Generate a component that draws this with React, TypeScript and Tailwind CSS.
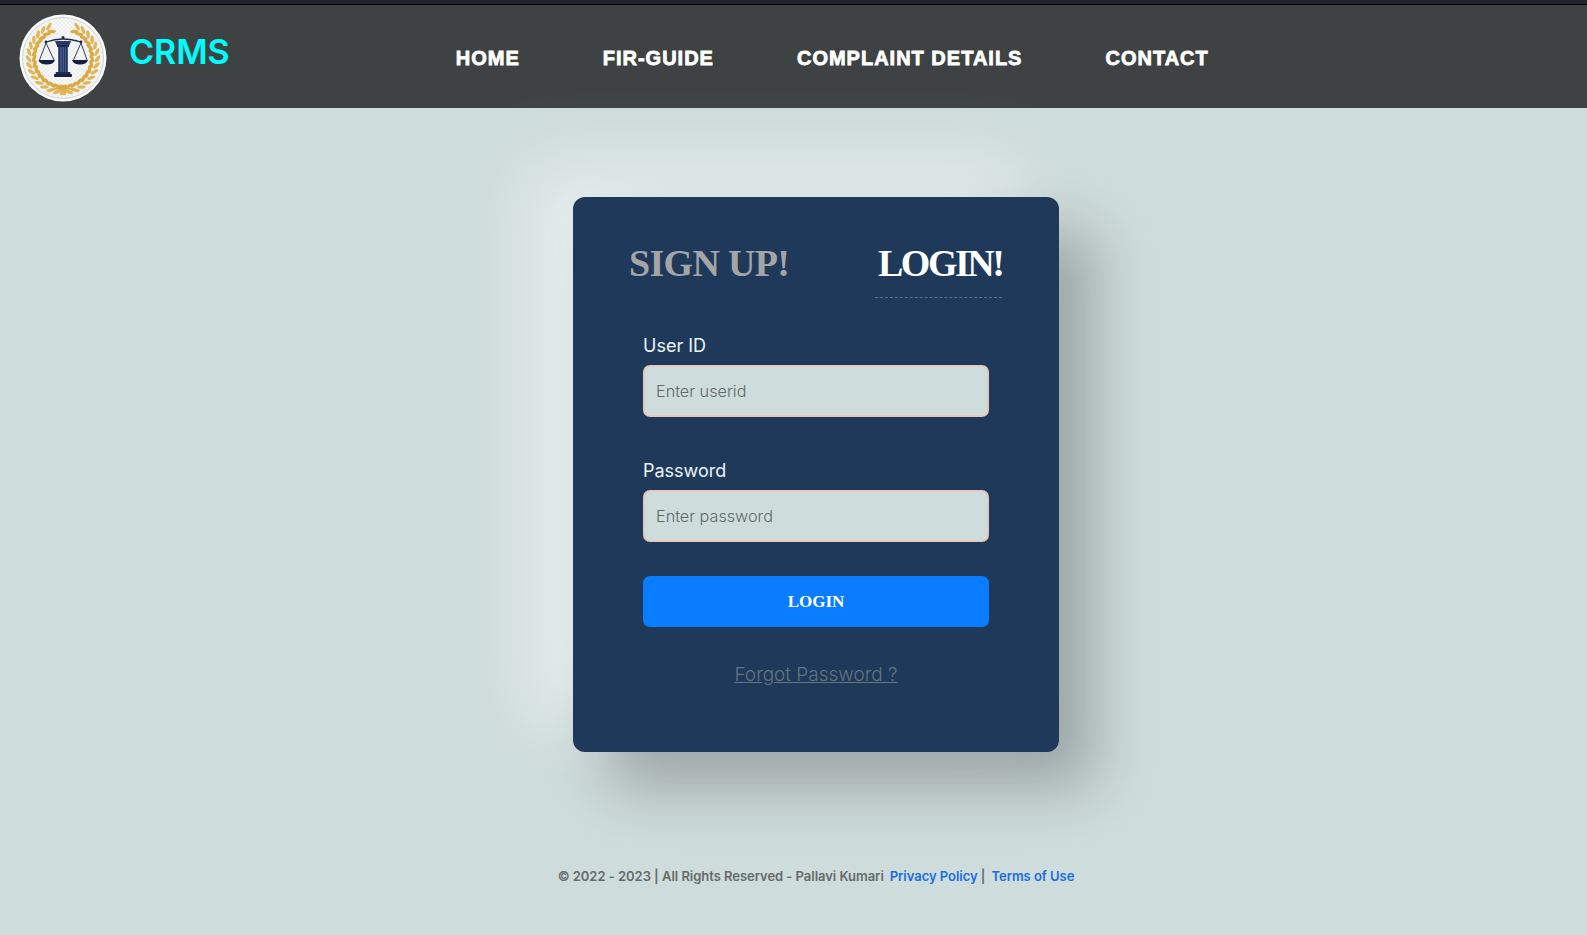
import React from 'react'

const Laurel = () => {
	const leaves = Array.from({ length: 15 }).map((_, i) => {
		const a = ((96 - i * 11.2) * Math.PI) / 180
		const r = 31.5
		const x = 44 + r * Math.cos(a)
		const y = 44 + r * Math.sin(a)
		const deg = (Math.atan2(-Math.cos(a), Math.sin(a)) * 180) / Math.PI
		return (
			<g key={i} transform={`translate(${x} ${y}) rotate(${deg})`}>
				<ellipse cx="3" cy="-2.8" rx="4.2" ry="1.7" transform="rotate(-28 3 -2.8)" fill="#dca943" />
				<ellipse cx="3" cy="2.8" rx="4.2" ry="1.7" transform="rotate(28 3 2.8)" fill="#e2b555" />
			</g>
		)
	})
	return <g>{leaves}</g>
}

const Logo = () => {
	return (
		<svg width="88" height="88" viewBox="0 0 88 88" className="shrink-0">
			<defs>
				<pattern id="checks" width="4" height="4" patternUnits="userSpaceOnUse">
					<rect width="4" height="4" fill="#fafafa" />
					<rect width="2" height="2" fill="#eceded" />
					<rect x="2" y="2" width="2" height="2" fill="#eceded" />
				</pattern>
			</defs>
			<circle cx="44" cy="44" r="43.5" fill="#fbfbfb" />
			<circle cx="44" cy="44" r="40.5" fill="url(#checks)" stroke="#cfd2d4" strokeWidth="1" />
			<Laurel />
			<g transform="translate(88 0) scale(-1 1)">
				<Laurel />
			</g>
			<path d="M33 76 Q40 73 44 76 Q48 73 55 76" stroke="#dca943" strokeWidth="1.8" fill="none" />
			{/* scales and column */}
			<circle cx="44" cy="23.5" r="1.5" fill="#1c2a52" />
			<path d="M27 28 Q36 25 44 25 Q52 25 62 28" stroke="#1c2a52" strokeWidth="1.3" fill="none" />
			<circle cx="27" cy="28" r="1.4" fill="#1c2a52" />
			<circle cx="62" cy="28" r="1.4" fill="#1c2a52" />
			<path d="M36 27 h16 l-1.5 4 h-13 z" fill="#2a3a66" />
			<path d="M38 31 h12 v2 h-12 z" fill="#1c2a52" />
			<rect x="39" y="33" width="10" height="25" fill="#4a5d8c" />
			<path d="M40.6 33v25M43 33v25M45.4 33v25M47.6 33v25" stroke="#1c2a52" strokeWidth="0.9" />
			<rect x="36.5" y="58" width="15" height="2.2" rx="1" fill="#1c2a52" />
			<rect x="35" y="60" width="18" height="3" rx="1" fill="#141f42" />
			<path d="M27 29 L20.5 46 M27 29 L35 46 M62 29 L54.5 46 M62 29 L68 46" stroke="#1c2a52" strokeWidth="0.9" fill="none" />
			<path d="M19.5 46 h16.5 q-1.5 4.5 -8.2 4.5 q-6.8 0 -8.3 -4.5z" fill="#141f42" />
			<path d="M53 46 h16 q-1.5 4.5 -8 4.5 q-6.5 0 -8 -4.5z" fill="#141f42" />
		</svg>
	)
}

const Field = ({ label, placeholder, type }: { label: string, placeholder: string, type: string }) => {
	return (
		<div className="flex flex-col">
			<label className="text-[18px] leading-[27px] text-[#eef5f8] font-normal">{label}</label>
			<input
				type={type}
				placeholder={placeholder}
				className="mt-[6px] h-[52px] w-full rounded-[7px] border-2 border-[#e6c9bc] bg-[#cfdcdc] px-[11px] text-[16.2px] font-light outline-none placeholder:text-[#5f6a68]"
			/>
		</div>
	)
}

const Header = () => {
	return (
		<div className="h-[108px] bg-[#3e4243] border-t-[4px] border-[#22222b] shadow-[inset_0_1px_0_#000]">
			<div className="flex items-start pl-[19px] pt-[10px]">
				<Logo />
				<div className="ml-[22px] mt-[13px] text-[34px] leading-[50px] font-semibold text-[#00fdfd]">CRMS</div>
				<div className="ml-[226px] mt-[31px] flex gap-[83px] text-[20px] leading-[26px] font-bold text-white tracking-[1px] font-['Liberation_Sans',sans-serif] [-webkit-text-stroke:0.8px_white]">
					<a>HOME</a>
					<a>FIR-GUIDE</a>
					<a>COMPLAINT DETAILS</a>
					<a>CONTACT</a>
				</div>
			</div>
		</div>
	)
}

const LoginCard = () => {
	return (
		<div className="w-[486px] h-[555px] rounded-[12px] bg-[#1f395b] shadow-[35px_35px_60px_rgba(0,0,0,0.25),-45px_-30px_70px_rgba(255,255,255,0.5)]">
			<div className="flex justify-between px-[57px] pt-[41px] font-['Liberation_Serif',serif] font-bold text-[38px] leading-[50px]">
				<div className="text-[#a5a5a5] -ml-[1px] tracking-[-0.7px]">SIGN UP!</div>
				<div className="w-[127px] h-[60px] border-b border-dashed border-[#5c6f85] pl-[3px] text-white tracking-[-2.5px]">LOGIN!</div>
			</div>
			<div className="px-[70px] pt-[34px]">
				<Field label="User ID" placeholder="Enter userid" type="text" />
				<div className="h-[40px]" />
				<Field label="Password" placeholder="Enter password" type="password" />
				<button className="mt-[34px] h-[51px] w-full rounded-[7px] bg-[#0a7cff] text-white font-['Liberation_Serif',serif] font-bold text-[17px]">LOGIN</button>
				<div className="mt-[34px] text-center">
					<a className="text-[19px] leading-[28px] font-light underline text-[#65737f]">Forgot Password ?</a>
				</div>
			</div>
		</div>
	)
}

const Footer = () => {
	return (
		<div className="mt-[114px] text-center text-[13px] leading-[20px] font-semibold tracking-[-0.035px] text-[#666b6b]">
			© 2022 - 2023 | All Rights Reserved - Pallavi Kumari
			<a className="ml-[6px] text-[#1a6de0]">Privacy Policy</a> |
			<a className="ml-[6px] text-[#1a6de0]">Terms of Use</a>
		</div>
	)
}

export default function App() {
	return (
		<div className="min-h-[935px] bg-[#cfdcdc] overflow-hidden font-['Inter',sans-serif]">
			<Header />
			<div className="flex flex-col items-center pl-[45px] pt-[89px]">
				<LoginCard />
				<Footer />
			</div>
		</div>
	)
}
